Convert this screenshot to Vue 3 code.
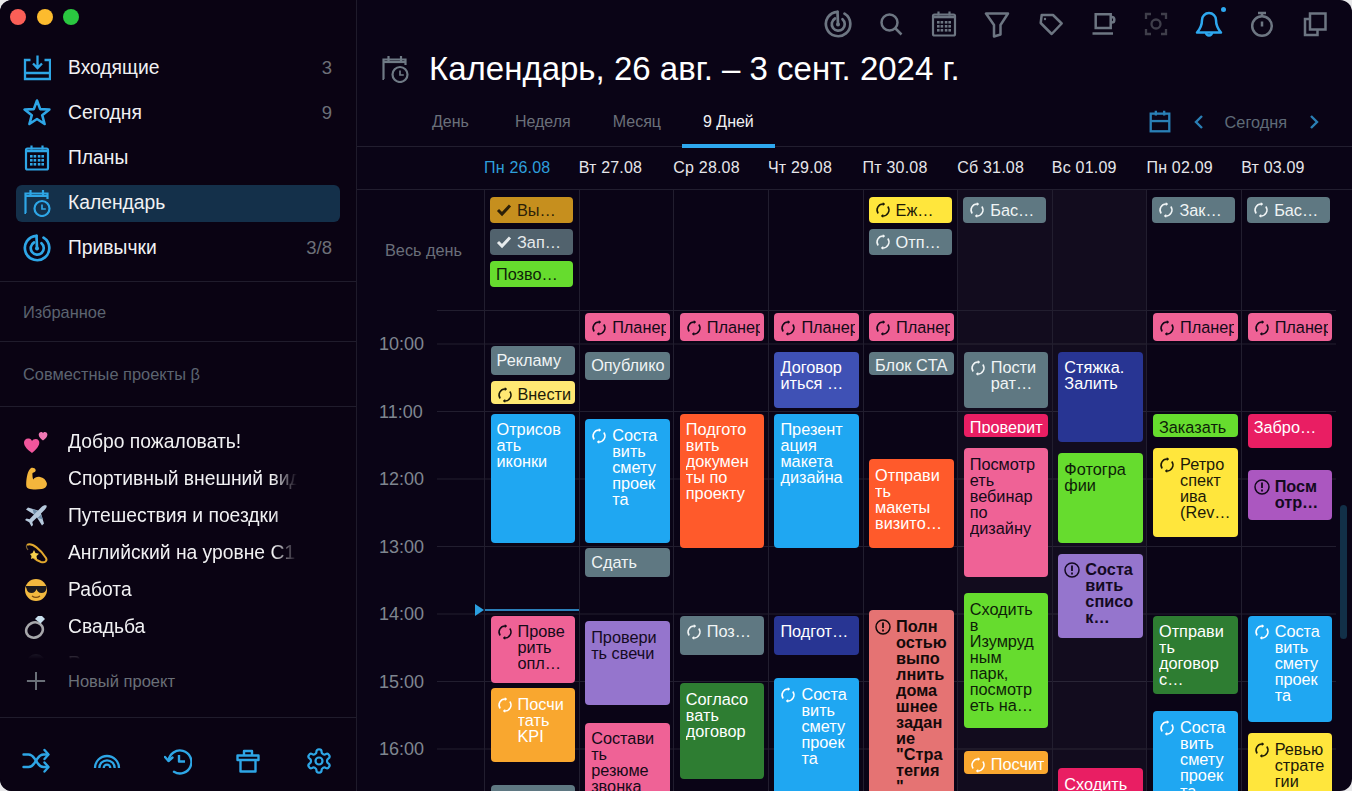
<template>
  <div class="window">
    <svg class="defs" xmlns="http://www.w3.org/2000/svg">
      <symbol id="i-inbox" viewBox="0 0 28 28"><g fill="none" stroke="currentColor" stroke-width="2.300"><path d="M7.500 6H2v19h25V6h-5.500M2 19h25"/><path d="M14.500 1.500V14M10 9.500l4.500 4.500 4.500-4.500"/></g></symbol>
      <symbol id="i-star" viewBox="0 0 28 28"><polygon fill="none" stroke="currentColor" stroke-width="2.600" stroke-linejoin="round" points="14,1.500 17.200,10.100 26.400,10.500 19.200,16.200 21.600,25 14,20 6.400,25 8.800,16.200 1.600,10.500 10.800,10.100"/></symbol>
      <symbol id="i-plans" viewBox="0 0 28 28"><g fill="none" stroke="currentColor" stroke-width="2.200"><rect x="3" y="4.500" width="22" height="21" rx="1.500"/><path d="M8.500 1.500v4M19.500 1.500v4"/><path d="M3 7h22" stroke-width="2.600"/></g><g fill="currentColor"><rect x="7" y="11" width="2.600" height="2.600"/><rect x="10.600" y="11" width="2.600" height="2.600"/><rect x="14.800" y="11" width="2.600" height="2.600"/><rect x="18.400" y="11" width="2.600" height="2.600"/><rect x="7" y="15" width="2.600" height="2.600"/><rect x="10.600" y="15" width="2.600" height="2.600"/><rect x="14.800" y="15" width="2.600" height="2.600"/><rect x="18.400" y="15" width="2.600" height="2.600"/><rect x="7" y="19" width="2.600" height="2.600"/><rect x="10.600" y="19" width="2.600" height="2.600"/><rect x="14.800" y="19" width="2.600" height="2.600"/><rect x="18.400" y="19" width="2.600" height="2.600"/></g></symbol>
      <symbol id="i-calclock" viewBox="0 0 28 28"><g fill="none" stroke="currentColor" stroke-width="2.200"><path d="M3 24h-.5V4.500H24.500V10"/><path d="M7.500 1v5M20 1v5"/><path d="M2.500 7h22" stroke-width="2.200"/><circle cx="19" cy="19.500" r="7.500"/><path d="M19 15.500v4.500h3.800" stroke-width="1.700"/></g></symbol>
      <symbol id="i-habit" viewBox="0 0 28 28"><g fill="none" stroke="currentColor" stroke-width="2.700" stroke-linecap="round"><path d="M13.500 1.800A12.200 12.200 0 1 0 20.500 3.600"/><path d="M11 8.500A6.500 6.500 0 1 0 18.500 9.200"/><path d="M13.500 1.800L14 14.500"/></g><circle cx="14" cy="14.500" r="2" fill="currentColor"/></symbol>
      <symbol id="i-shuffle" viewBox="0 0 28 28"><g fill="none" stroke="currentColor" stroke-width="2.400" stroke-linecap="round" stroke-linejoin="round"><path d="M1.500 7.500h5c3 0 4.500 1.800 6 4l3 4.500c1.500 2.300 3 4 6 4h4.500"/><path d="M1.500 20h5c3 0 4.500-1.700 6-4l3-4.500c1.500-2.200 3-4 6-4h4.500"/><path d="M22.500 3l4 4.500-4 4.500M22.500 15.500l4 4.500-4 4.500"/></g></symbol>
      <symbol id="i-rainbow" viewBox="0 0 28 28"><g fill="none" stroke="currentColor" stroke-width="2.300"><path d="M2 21a12 12 0 0 1 24 0"/><path d="M6.300 21a7.700 7.700 0 0 1 15.400 0"/><path d="M10.700 21a3.300 3.300 0 0 1 6.600 0"/></g></symbol>
      <symbol id="i-history" viewBox="0 0 28 28"><g fill="none" stroke="currentColor" stroke-width="2.400" stroke-linecap="round" stroke-linejoin="round"><path d="M4.500 13.500A11.500 11.500 0 1 1 10 24.800"/><path d="M1 10l3.500 4 4-3.500"/><path d="M15 8v6.500h6" stroke-linecap="butt"/></g></symbol>
      <symbol id="i-box" viewBox="0 0 28 28"><g fill="none" stroke="currentColor" stroke-width="2.400" stroke-linejoin="round"><path d="M3.500 8.500h21v4.500h-21z"/><path d="M6.500 13v11.500h15V13"/><path d="M10 8.500V4h8v4.500"/></g></symbol>
      <symbol id="i-gear" viewBox="0 0 24 24"><g fill="none" stroke="currentColor" stroke-width="1.900"><path d="M12.220 2h-.44a2 2 0 0 0-2 2v.18a2 2 0 0 1-1 1.730l-.43.250a2 2 0 0 1-2 0l-.15-.08a2 2 0 0 0-2.730.730l-.22.380a2 2 0 0 0 .73 2.730l.15.100a2 2 0 0 1 1 1.720v.510a2 2 0 0 1-1 1.740l-.15.090a2 2 0 0 0-.73 2.730l.22.380a2 2 0 0 0 2.730.730l.15-.08a2 2 0 0 1 2 0l.43.250a2 2 0 0 1 1 1.730V20a2 2 0 0 0 2 2h.44a2 2 0 0 0 2-2v-.18a2 2 0 0 1 1-1.730l.43-.25a2 2 0 0 1 2 0l.15.08a2 2 0 0 0 2.730-.73l.22-.39a2 2 0 0 0-.73-2.730l-.15-.08a2 2 0 0 1-1-1.740v-.5a2 2 0 0 1 1-1.740l.15-.09a2 2 0 0 0 .73-2.730l-.22-.38a2 2 0 0 0-2.730-.73l-.15.08a2 2 0 0 1-2 0l-.43-.25a2 2 0 0 1-1-1.730V4a2 2 0 0 0-2-2z"/><circle cx="12" cy="12" r="3"/></g></symbol>
      <symbol id="i-search" viewBox="0 0 28 28"><g fill="none" stroke="currentColor" stroke-width="2.500"><circle cx="12.500" cy="12.500" r="8"/><path d="M18.500 18.500l6 6"/></g></symbol>
      <symbol id="i-funnel" viewBox="0 0 28 28"><path fill="none" stroke="currentColor" stroke-width="2.500" stroke-linejoin="round" d="M3 3.500h22L17.500 15v9.500l-6.500 2V15z"/></symbol>
      <symbol id="i-tag" viewBox="0 0 28 28"><g fill="none" stroke="currentColor" stroke-width="2.500" stroke-linejoin="round"><path d="M5.700 5H17l8.700 8.500-10 10.500L4.700 13z"/></g><circle cx="9" cy="9" r="1.200" fill="currentColor"/></symbol>
      <symbol id="i-cup" viewBox="0 0 28 28"><g fill="none" stroke="currentColor" stroke-width="2.500"><path d="M6.700 4.300h15V18h-15z"/><path d="M21.700 7h1a2.600 2.600 0 0 1 2.600 2.600v.4a2.600 2.600 0 0 1-2.600 2.600h-1"/><path d="M3.500 23.500h20.500"/></g></symbol>
      <symbol id="i-focus" viewBox="0 0 28 28"><g fill="none" stroke="currentColor" stroke-width="2.300"><path d="M9 4H4v5M19 4h5v5M9 24H4v-5M19 24h5v-5"/><circle cx="14" cy="14" r="4.500"/></g></symbol>
      <symbol id="i-bell" viewBox="0 0 28 28"><g fill="none" stroke="currentColor" stroke-width="2.500" stroke-linejoin="round"><path d="M14 3a7 7 0 0 0-7 7c0 6.500-2.800 10-5 12.500h24C23.800 20 21 16.500 21 10a7 7 0 0 0-7-7z"/><path d="M11 22.500a3 3 0 0 0 6 0"/></g></symbol>
      <symbol id="i-watch" viewBox="0 0 28 28"><g fill="none" stroke="currentColor" stroke-width="2.500"><circle cx="14" cy="16" r="9.800"/><path d="M10 3h8M14 3v3.500M14 11.500v5"/></g></symbol>
      <symbol id="i-copy" viewBox="0 0 28 28"><g fill="none" stroke="currentColor" stroke-width="2.500"><path d="M9 3.500h15.500v16H9z"/><path d="M9 9H4v16h12.500v-5.500"/></g></symbol>
      <symbol id="i-cal2" viewBox="0 0 28 28"><g fill="none" stroke="currentColor" stroke-width="2.500"><rect x="4" y="5" width="20" height="19"/><path d="M4 13h20" /><path d="M9.500 2v5M18.500 2v5"/></g></symbol>
      <symbol id="i-repeat" viewBox="0 0 16 16"><g fill="none" stroke="currentColor" stroke-width="1.500"><path d="M3.200 11.500A6 6 0 0 1 8.500 2"/><path d="M12.800 4.500A6 6 0 0 1 7.500 14"/></g><path fill="currentColor" d="M7.800 .3l2.500 1.800-2.500 1.900zM8.200 15.700l-2.500-1.800 2.500-1.900z"/></symbol>
      <symbol id="i-check" viewBox="0 0 16 16"><path fill="none" stroke="currentColor" stroke-width="3" d="M2 8l4 4 8-8.500"/></symbol>
      <symbol id="i-alert" viewBox="0 0 16 16"><g fill="none" stroke="currentColor" stroke-width="1.500"><circle cx="8" cy="8" r="7"/><path d="M8 3.600v5.400" stroke-width="1.800"/><path d="M8 10.400v2" stroke-width="1.800"/></g></symbol>
    </svg>

    <aside class="sidebar">
      <div class="lights">
        <span class="light l-red"></span>
        <span class="light l-amber"></span>
        <span class="light l-green"></span>
      </div>
      <nav class="nav">
        <div v-for="n in nav" :key="n.label" class="nav-row" :class="{ active: n.active }">
          <svg class="nav-icon"><use :href="'#' + n.icon" /></svg>
          <span class="nav-label">{{ n.label }}</span>
          <span class="nav-count">{{ n.count }}</span>
        </div>
      </nav>
      <div class="section fav">Избранное</div>
      <div class="section shared">Совместные проекты β</div>
      <div class="projects">
        <div v-for="p in projects" :key="p.label" class="project">
          <svg class="emoji" viewBox="0 0 24 24">
            <template v-if="p.emoji === 'hearts'">
              <path fill="#f0569c" d="M8 23C4 20 0 16.500 0 12.500 0 9.800 2.400 8 5 8.600c1.400.3 2.300 1.200 3 2.300.700-1.100 2-2 3.800-2 2.200 0 3.800 1.800 3.500 4C15 16.800 11 20.500 8 23z"/>
              <path fill="#f078b4" d="M19 10.500c-2.200-1.600-4.300-3.500-4.300-5.700 0-1.500 1.100-2.800 2.600-2.800.8 0 1.300.5 1.700 1.100.4-.6 1-1.100 1.900-1.100 1.500 0 2.600 1.200 2.500 2.700C23.200 7 21.200 8.900 19 10.500z"/>
            </template>
            <template v-else-if="p.emoji === 'arm'">
              <path fill="#f4b63c" d="M7 1c2-.8 4 .2 4.500 1.500.4 1 .1 2-.8 2.500L8.500 6c-.2 2 0 4.500.7 6.500 1.500-2 4-3 6.800-2.500 3.500.6 6 3 6.800 6 .6 3-1.500 5.500-5 6-4.500.700-10 .7-13.500-.5C2.500 21 2 19 2.200 16 2.500 10.500 3.500 4 7 1z"/>
            </template>
            <template v-else-if="p.emoji === 'plane'">
              <path fill="#b6c9dc" d="M22.500 1.500c-1.400-.7-3.500 0-5 1.500l-3.500 3.500L4 3.500 2 5.500l8 5-4.500 4.700-3-.7-1.500 1.500 4.200 2.300L7.500 22.500 9 21l-.7-3 4.700-4.500 5 8 2-2-3-10L20.500 6c1.500-1.500 2.700-3.300 2-4.500z"/>
              <path fill="#6f8da8" d="M10 10.500l3.500-3.500-5-2zM13.500 14l3.500-3.500 2 5z"/>
            </template>
            <template v-else-if="p.emoji === 'dizzy'">
              <path fill="none" stroke="#e3a92e" stroke-width="2" d="M3 4c5-3 14 5 19 13 1.500 3-1 5-5 4-3-1-6-3-8-5"/>
              <path fill="none" stroke="#7d6231" stroke-width="1.200" d="M3 4c-1 1-.5 3 1 5"/>
              <path fill="#f6d04d" d="M6 13l2.500-1 1.500-3 1.500 3 3.500.8-2.500 2.200.5 3.500-3-1.700-3 1.200.5-3z"/>
            </template>
            <template v-else-if="p.emoji === 'cool'">
              <circle cx="12" cy="12" r="11" fill="#f3b93f"/>
              <path fill="#1c1a1e" d="M1.500 8h21v2.500c-.5 3-2.500 4.500-5 4.500-2.800 0-4.400-1.800-5-4-.6 2.200-2.200 4-5 4-2.500 0-4.500-1.500-5-4.500z"/>
              <path fill="none" stroke="#7a4a12" stroke-width="1.300" d="M8 18c2.500 1.800 5.500 1.800 8 0"/>
            </template>
            <template v-else-if="p.emoji === 'ring'">
              <ellipse cx="10.500" cy="15" rx="8.500" ry="7.500" fill="none" stroke="#a7a7ab" stroke-width="2.600" transform="rotate(-25 10.500 15)"/>
              <path fill="#c9e0ee" d="M11 4l3-3h4l3 3-4.500 4.500z"/>
            </template>
            <circle v-else cx="12" cy="12" r="10" fill="#40404c"/>
          </svg>
          <span class="project-label">{{ p.label }}</span>
        </div>
      </div>
      <div class="new-project">
        <svg class="plus" viewBox="0 0 22 22"><path fill="none" stroke="currentColor" stroke-width="2.200" d="M11 1v20M1 11h20"/></svg>
        <span>Новый проект</span>
      </div>
      <footer class="side-foot">
        <svg v-for="f in footIcons" :key="f" class="foot-icon"><use :href="'#' + f" /></svg>
      </footer>
    </aside>

    <main class="main">
      <div class="toolbar">
        <svg v-for="t in toolIcons" :key="t.icon" class="tool" :class="t.cls"><use :href="'#' + t.icon" /></svg>
        <span class="bell-dot"></span>
      </div>
      <div class="title-row">
        <svg class="title-icon"><use href="#i-calclock" /></svg>
        <h1 class="title">Календарь, 26 авг. – 3 сент. 2024 г.</h1>
      </div>
      <div class="tabs">
        <div v-for="t in tabs" :key="t" class="tab" :class="{ active: t === '9 Дней' }">{{ t }}</div>
        <div class="tab-tools">
          <svg class="cal2"><use href="#i-cal2" /></svg>
          <svg class="chev" viewBox="0 0 12 16"><path fill="none" stroke="currentColor" stroke-width="2.400" d="M9 2L3 8l6 6"/></svg>
          <span class="today">Сегодня</span>
          <svg class="chev" viewBox="0 0 12 16"><path fill="none" stroke="currentColor" stroke-width="2.400" d="M3 2l6 6-6 6"/></svg>
        </div>
      </div>
      <div class="dates">
        <div v-for="(d, i) in dates" :key="d" class="date" :class="{ now: i === 0 }">{{ d }}</div>
      </div>
      <div class="allday">
        <div class="allday-label">Весь день</div>
        <div v-for="(chips, i) in allDay" :key="i" class="allday-col" :class="{ weekend: i === 5 || i === 6 }">
          <div v-for="c in chips" :key="c.text" class="chip" :class="c.color">
            <svg v-if="c.icon" class="ev-icon"><use :href="'#i-' + c.icon" /></svg>
            <span>{{ c.text }}</span>
          </div>
        </div>
      </div>
      <div class="timed">
        <div class="hours">
          <div v-for="h in hours" :key="h" class="hour">{{ h }}</div>
        </div>
        <div class="grid">
          <div class="spacer"></div>
          <div v-for="(col, i) in columns" :key="i" class="col" :class="{ weekend: i === 5 || i === 6 }">
            <template v-if="i === 0">
              <span class="now-arrow"></span>
              <span class="now-line"></span>
            </template>
            <div
              v-for="e in col"
              :key="e.text + e.top"
              class="event"
              :class="[e.color, { short: e.bottom - e.top < 36, bold: e.bold }]"
              :style="{ top: (e.top - 310) + 'px', height: (e.bottom - e.top) + 'px' }"
            >
              <svg v-if="e.icon" class="ev-icon"><use :href="'#i-' + e.icon" /></svg>
              <div class="ev-text">{{ e.text }}</div>
            </div>
          </div>
        </div>
        <div class="scrollbar"></div>
      </div>
    </main>
  </div>
</template>

<script setup>
const nav = [
  { label: 'Входящие', icon: 'i-inbox', count: '3' },
  { label: 'Сегодня', icon: 'i-star', count: '9' },
  { label: 'Планы', icon: 'i-plans', count: '' },
  { label: 'Календарь', icon: 'i-calclock', count: '', active: true },
  { label: 'Привычки', icon: 'i-habit', count: '3/8' }
]

const projects = [
  { label: 'Добро пожаловать!', emoji: 'hearts' },
  { label: 'Спортивный внешний вид', emoji: 'arm' },
  { label: 'Путешествия и поездки', emoji: 'plane' },
  { label: 'Английский на уровне С1', emoji: 'dizzy' },
  { label: 'Работа', emoji: 'cool' },
  { label: 'Свадьба', emoji: 'ring' },
  { label: 'Ремонт', emoji: 'dark' }
]

const footIcons = ['i-shuffle', 'i-rainbow', 'i-history', 'i-box', 'i-gear']

const toolIcons = [
  { icon: 'i-habit' },
  { icon: 'i-search' },
  { icon: 'i-plans' },
  { icon: 'i-funnel' },
  { icon: 'i-tag' },
  { icon: 'i-cup' },
  { icon: 'i-focus', cls: 'dim' },
  { icon: 'i-bell', cls: 'on' },
  { icon: 'i-watch' },
  { icon: 'i-copy' }
]

const tabs = ['День', 'Неделя', 'Месяц', '9 Дней']

const dates = ['Пн 26.08', 'Вт 27.08', 'Ср 28.08', 'Чт 29.08', 'Пт 30.08', 'Сб 31.08', 'Вс 01.09', 'Пн 02.09', 'Вт 03.09']

const hours = ['10:00', '11:00', '12:00', '13:00', '14:00', '15:00', '16:00']

const allDay = [
  [
    { text: 'Вы…', color: 'gold', icon: 'check' },
    { text: 'Зап…', color: 'slate', icon: 'check' },
    { text: 'Позво…', color: 'lime' }
  ],
  [],
  [],
  [],
  [
    { text: 'Еж…', color: 'yellow', icon: 'repeat' },
    { text: 'Отп…', color: 'grey', icon: 'repeat' }
  ],
  [{ text: 'Бас…', color: 'grey', icon: 'repeat' }],
  [],
  [{ text: 'Зак…', color: 'grey', icon: 'repeat' }],
  [{ text: 'Бас…', color: 'grey', icon: 'repeat' }]
]

const planner = { top: 313.3, bottom: 340.7, color: 'pink', text: 'Планер', icon: 'repeat' }
const estimate = { color: 'blue', text: 'Соста\nвить\nсмету\nпроек\nта', icon: 'repeat' }

const columns = [
  [
    { top: 346.3, bottom: 375, color: 'grey', text: 'Рекламу' },
    { top: 380.7, bottom: 404.3, color: 'pale', text: 'Внести', icon: 'repeat' },
    { top: 413.7, bottom: 542.7, color: 'blue', text: 'Отрисов\nать\nиконки' },
    { top: 615.7, bottom: 682.7, color: 'pink', text: 'Прове\nрить\nопл…', icon: 'repeat' },
    { top: 688.3, bottom: 762, color: 'orange', text: 'Посчи\nтать\nKPI', icon: 'repeat' },
    { top: 784.7, bottom: 830, color: 'grey', text: '' }
  ],
  [
    planner,
    { top: 351.7, bottom: 380.3, color: 'grey', text: 'Опублико' },
    { ...estimate, top: 419, bottom: 542.7 },
    { top: 548.3, bottom: 577, color: 'grey', text: 'Сдать' },
    { top: 621, bottom: 705.3, color: 'purple', text: 'Провери\nть свечи' },
    { top: 722.7, bottom: 830, color: 'pink', text: 'Состави\nть\nрезюме\nзвонка' }
  ],
  [
    planner,
    { top: 413.7, bottom: 548, color: 'red', text: 'Подгото\nвить\nдокумен\nты по\nпроекту' },
    { top: 615.7, bottom: 655, color: 'grey', text: 'Поз…', icon: 'repeat' },
    { top: 683.3, bottom: 779, color: 'forest', text: 'Согласо\nвать\nдоговор' }
  ],
  [
    planner,
    { top: 351.7, bottom: 408, color: 'indigo', text: 'Договор\nиться …' },
    { top: 413.7, bottom: 548, color: 'blue', text: 'Презент\nация\nмакета\nдизайна' },
    { top: 615.7, bottom: 655, color: 'navy', text: 'Подгот…' },
    { ...estimate, top: 678, bottom: 830 }
  ],
  [
    planner,
    { top: 351.7, bottom: 375, color: 'grey', text: 'Блок CTA' },
    { top: 459, bottom: 548, color: 'red', text: 'Отправи\nть\nмакеты\nвизито…' },
    { top: 610.3, bottom: 830, color: 'salmon', bold: true, icon: 'alert', text: 'Полн\nостью\nвыпо\nлнить\nдома\nшнее\nзадан\nие\n"Стра\nтегия\n"' }
  ],
  [
    { top: 351.7, bottom: 407.7, color: 'grey', text: 'Пости\nрат…', icon: 'repeat' },
    { top: 413.7, bottom: 437.3, color: 'crimson', text: 'Проверит' },
    { top: 448.3, bottom: 577, color: 'pink', text: 'Посмотр\nеть\nвебинар\nпо\nдизайну' },
    { top: 593.3, bottom: 727.7, color: 'lime', text: 'Сходить\nв\nИзумруд\nным\nпарк,\nпосмотр\nеть на…' },
    { top: 750.7, bottom: 774, color: 'orange', text: 'Посчит', icon: 'repeat' }
  ],
  [
    { top: 351.7, bottom: 442.3, color: 'navy', text: 'Стяжка.\nЗалить' },
    { top: 453.3, bottom: 542.7, color: 'lime', text: 'Фотогра\nфии' },
    { top: 553.7, bottom: 637.7, color: 'purple', bold: true, icon: 'alert', text: 'Соста\nвить\nсписо\nк…' },
    { top: 768, bottom: 830, color: 'crimson', text: 'Сходить' }
  ],
  [
    planner,
    { top: 413.7, bottom: 437.3, color: 'lime', text: 'Заказать' },
    { top: 448.3, bottom: 537.3, color: 'yellow', text: 'Ретро\nспект\nива\n(Rev…', icon: 'repeat' },
    { top: 615.7, bottom: 694.3, color: 'forest', text: 'Отправи\nть\nдоговор\nс…' },
    { ...estimate, top: 711, bottom: 830 }
  ],
  [
    planner,
    { top: 413.7, bottom: 447.7, color: 'crimson', text: 'Забро…' },
    { top: 470.3, bottom: 520.3, color: 'violet', bold: true, icon: 'alert', text: 'Посм\nотр…' },
    { ...estimate, top: 615.7, bottom: 722.3 },
    { top: 733.3, bottom: 830, color: 'yellow', text: 'Ревью\nстрате\nгии', icon: 'repeat' }
  ]
]
</script>

<style>
html, body {
  margin: 0;
  background: #e9e9eb;
  overflow: hidden;
}
</style>

<style scoped>
.window {
  width: 1352px;
  height: 791px;
  display: flex;
  overflow: hidden;
  border-radius: 12px;
  background: #0a0416;
  color: #f1f1f3;
  font-family: "Liberation Sans", Arial, sans-serif;
  font-size: 16px;
}
.defs {
  display: none;
}
.sidebar {
  width: 356px;
  flex: none;
  display: flex;
  flex-direction: column;
  border-right: 1px solid #1f1b2b;
  background: #0a0313;
}
.lights {
  height: 45px;
  padding: 9px 0 0 10px;
  box-sizing: border-box;
  display: flex;
  gap: 10.500px;
}
.light {
  width: 16px;
  height: 16px;
  border-radius: 50%;
}
.l-red { background: #fb5f57; }
.l-amber { background: #fcbb2e; }
.l-green { background: #2ac840; }
.nav {
  padding: 4.500px 16px 14.500px;
  display: flex;
  flex-direction: column;
  gap: 8px;
  border-bottom: 1px solid #201c2c;
}
.nav-row {
  height: 37px;
  padding: 0 8px 0 7px;
  display: flex;
  align-items: center;
  border-radius: 6px;
  font-size: 19.300px;
}
.nav-row.active {
  background: #14304a;
}
.nav-icon {
  width: 28px;
  height: 28px;
  margin-right: 17px;
  color: #2ea6e6;
}
.nav-label {
  flex: 1;
}
.nav-count {
  color: #6d7078;
  font-size: 18.500px;
}
.section {
  padding-left: 23px;
  display: flex;
  align-items: center;
  color: #5c6470;
  border-bottom: 1px solid #201c2c;
  box-sizing: border-box;
  font-size: 16.400px;
}
.section.fav {
  height: 60px;
  padding-top: 1px;
}
.section.shared {
  height: 65px;
}
.projects {
  height: 255px;
  padding-top: 16.500px;
  box-sizing: border-box;
  overflow: hidden;
  -webkit-mask-image: linear-gradient(to bottom, #000 235px, transparent 252px);
  mask-image: linear-gradient(to bottom, #000 235px, transparent 252px);
}
.project {
  height: 37px;
  padding-left: 24px;
  display: flex;
  align-items: center;
  font-size: 19.300px;
}
.emoji {
  width: 24px;
  height: 24px;
  margin-right: 20px;
  flex: none;
}
.project-label {
  width: 229px;
  white-space: nowrap;
  overflow: hidden;
  -webkit-mask-image: linear-gradient(to right, #000 205px, transparent 229px);
  mask-image: linear-gradient(to right, #000 205px, transparent 229px);
}
.new-project {
  height: 38px;
  padding-left: 26px;
  display: flex;
  align-items: center;
  color: #6a7078;
  font-size: 16.500px;
}
.plus {
  width: 20px;
  height: 20px;
  margin-right: 22px;
}
.side-foot {
  margin-top: 17px;
  flex: 1;
  padding: 12px 23px 0 22px;
  display: flex;
  justify-content: space-between;
  align-items: center;
  border-top: 1px solid #201c2c;
}
.foot-icon {
  width: 28px;
  height: 28px;
  color: #2ea6e6;
}
.main {
  flex: 1;
  min-width: 0;
  display: flex;
  flex-direction: column;
}
.toolbar {
  height: 48px;
  padding-right: 23px;
  display: flex;
  justify-content: flex-end;
  align-items: center;
  gap: 25px;
  box-sizing: border-box;
  position: relative;
}
.tool {
  width: 28px;
  height: 28px;
  color: #6d7682;
}
.tool.dim {
  color: #3f3e4a;
}
.tool.on {
  color: #2ea8ef;
}
.bell-dot {
  position: absolute;
  left: 864px;
  top: 7px;
  width: 5px;
  height: 5px;
  border-radius: 50%;
  background: #2ea8ef;
}
.title-row {
  height: 50px;
  padding: 0 0 8px 24px;
  box-sizing: border-box;
  display: flex;
  align-items: center;
}
.title-icon {
  width: 28px;
  height: 28px;
  margin-right: 20px;
  color: #6f7a85;
}
.title {
  margin: 0;
  font-size: 33px;
  font-weight: 400;
  color: #fff;
  white-space: nowrap;
}
.tabs {
  height: 48px;
  padding-left: 54px;
  display: flex;
  align-items: flex-start;
  border-bottom: 1px solid #221e2f;
}
.tab {
  height: 50px;
  padding: 2px 21px 0;
  box-sizing: border-box;
  display: flex;
  align-items: center;
  color: #6a707a;
  border-bottom: 4px solid transparent;
}
.tab:first-child {
  padding-right: 25px;
}
.tab.active {
  color: #f1f1f3;
  border-bottom-color: #2ea8ef;
}
.tab-tools {
  margin-left: auto;
  height: 48px;
  padding-right: 32px;
  display: flex;
  align-items: center;
}
.cal2 {
  width: 26px;
  height: 26px;
  color: #2a7fb5;
  margin-right: 20px;
}
.chev {
  width: 12px;
  height: 16px;
  color: #2a7fb5;
}
.today {
  margin: 0 21px 0 20px;
  color: #5f6b78;
  font-size: 16.300px;
}
.dates {
  height: 42px;
  padding-left: 127px;
  display: grid;
  grid-template-columns: repeat(9, 94.650px);
  align-items: center;
}
.date {
  color: #e6e6ea;
  letter-spacing: 0.200px;
}
.date.now {
  color: #2e9fdc;
}
.allday {
  height: 121px;
  flex: none;
  display: grid;
  grid-template-columns: 127px repeat(9, 94.650px);
  border-top: 1px solid #221e2f;
  box-sizing: border-box;
}
.allday-label {
  padding: 0 0 0 28px;
  align-self: center;
  color: #6a6f7a;
  font-size: 16.300px;
}
.allday-col {
  padding: 7px 0 0 5px;
  border-left: 1px solid #221e2f;
  display: flex;
  flex-direction: column;
  gap: 6px;
}
.weekend {
  background: rgba(255, 255, 255, 0.035);
}
.chip {
  width: 83px;
  height: 26px;
  padding: 0 6px;
  box-sizing: border-box;
  display: flex;
  align-items: center;
  border-radius: 4px;
  white-space: nowrap;
  overflow: hidden;
  font-size: 16.300px;
}
.ev-icon {
  width: 16px;
  height: 16px;
  flex: none;
  margin: 0 5px 0 0;
}
.timed {
  flex: 1;
  min-height: 0;
  display: flex;
  overflow: hidden;
  position: relative;
}
.hours {
  width: 80px;
  flex: none;
  padding: 1px 0 0 22px;
  box-sizing: border-box;
}
.hour {
  height: 67.500px;
  line-height: 67.500px;
  color: #7f8690;
  font-size: 18px;
}
.grid {
  width: 899px;
  flex: none;
  height: 100%;
  display: grid;
  grid-template-columns: 47px repeat(9, 94.650px);
  border-top: 1px solid #221e2f;
  box-sizing: border-box;
  background-image: linear-gradient(#221e2f 1px, transparent 1px);
  background-size: 100% 67.500px;
  background-position: 0 32.500px;
}
.col {
  position: relative;
  border-left: 1px solid #221e2f;
}
.event {
  position: absolute;
  left: 5.500px;
  width: 84.700px;
  box-sizing: border-box;
  padding: 7.500px 4px 4px 6px;
  display: flex;
  align-items: flex-start;
  border-radius: 4px;
  overflow: hidden;
  margin-top: -1px;
  font-size: 16.300px;
}
.event.short {
  padding-top: 5.500px;
}
.event .ev-icon {
  margin: 1px 5px 0 0;
}
.ev-text {
  flex: 1;
  min-width: 0;
  height: 100%;
  line-height: 16px;
  white-space: pre;
  overflow: hidden;
}
.bold .ev-text {
  font-weight: 700;
}
.now-arrow {
  position: absolute;
  left: -10px;
  top: 293px;
  border-left: 9px solid #2b9fe0;
  border-top: 6px solid transparent;
  border-bottom: 6px solid transparent;
}
.now-line {
  position: absolute;
  left: 0;
  right: 0;
  top: 298px;
  height: 2px;
  background: #2b7fb8;
}
.scrollbar {
  position: absolute;
  left: 983px;
  top: 195px;
  width: 7px;
  height: 134px;
  border-radius: 4px;
  background: #123048;
}
.blue { background: #1fa7f2; color: #fff; }
.orange { background: #f9a72f; color: #fff; }
.red { background: #ff5a2b; color: #fff; }
.pink { background: #ef6296; color: #140a18; }
.grey { background: #5f7882; color: #f0f4f5; }
.slate { background: #51626d; color: #e6eaec; }
.gold { background: #c68f1e; color: #2c1f08; }
.lime { background: #66dc2e; color: #0e1e08; }
.yellow { background: #ffe63c; color: #1c1a08; }
.pale { background: #ffe873; color: #1c1a08; }
.purple { background: #9575cd; color: #140a22; }
.violet { background: #ab57c0; color: #140a1e; }
.crimson { background: #e91e63; color: #fff; }
.navy { background: #283593; color: #fff; }
.indigo { background: #3f51b5; color: #fff; }
.forest { background: #2e7d32; color: #fff; }
.salmon { background: #e57373; color: #140a0a; }
</style>
